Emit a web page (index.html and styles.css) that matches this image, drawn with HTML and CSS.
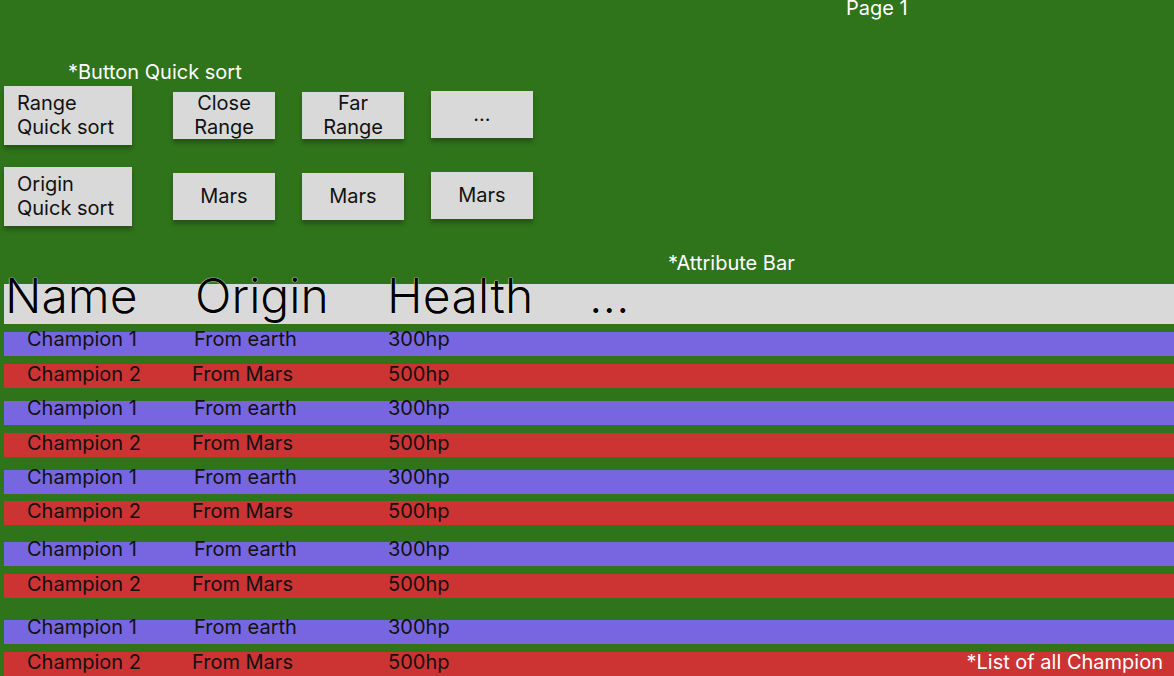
FILE: index.html
```html
<!DOCTYPE html>
<html>
<head>
<meta charset="utf-8">
<link rel="stylesheet" href="styles.css">
</head>
<body>
<div class="page">
  <div class="page-title">Page 1</div>
  <div class="note note-buttons">*Button Quick sort</div>
  <div class="sort-grid">
    <div class="btn btn-main">Range<br>Quick sort</div>
    <div class="btn">Close<br>Range</div>
    <div class="btn">Far<br>Range</div>
    <div class="btn btn-dots">...</div>
    <div class="btn btn-main">Origin<br>Quick sort</div>
    <div class="btn">Mars</div>
    <div class="btn">Mars</div>
    <div class="btn btn-dots">Mars</div>
  </div>
  <div class="note note-attr">*Attribute Bar</div>
  <div class="attr-bar">
    <span>Name</span>
    <span>Origin</span>
    <span>Health</span>
    <span>...</span>
  </div>
  <div class="list">
    <div class="pair">
      <div class="row earth"><span>Champion 1</span><span>From earth</span><span>300hp</span></div>
      <div class="row mars"><span>Champion 2</span><span>From Mars</span><span>500hp</span></div>
    </div>
    <div class="pair">
      <div class="row earth"><span>Champion 1</span><span>From earth</span><span>300hp</span></div>
      <div class="row mars"><span>Champion 2</span><span>From Mars</span><span>500hp</span></div>
    </div>
    <div class="pair tight">
      <div class="row earth"><span>Champion 1</span><span>From earth</span><span>300hp</span></div>
      <div class="row mars"><span>Champion 2</span><span>From Mars</span><span>500hp</span></div>
    </div>
    <div class="pair far">
      <div class="row earth"><span>Champion 1</span><span>From earth</span><span>300hp</span></div>
      <div class="row mars"><span>Champion 2</span><span>From Mars</span><span>500hp</span></div>
    </div>
    <div class="pair farther">
      <div class="row earth"><span>Champion 1</span><span>From earth</span><span>300hp</span></div>
      <div class="row mars"><span>Champion 2</span><span>From Mars</span><span>500hp</span><span class="list-note">*List of all Champion</span></div>
    </div>
  </div>
</div>
</body>
</html>
```
FILE: styles.css
```css
html, body {
  margin: 0;
  padding: 0;
}
body {
  background: #2f731b;
  font-family: Inter, "Noto Sans", sans-serif;
  width: 1174px;
  height: 676px;
  overflow: hidden;
}
.page {
  display: flex;
  flex-direction: column;
}
.page-title {
  color: #fff;
  font-size: 20px;
  line-height: 16px;
  height: 16px;
  padding-left: 846px;
}
.note {
  color: #fff;
  font-size: 20px;
  line-height: 20px;
  height: 20px;
}
.note-buttons {
  margin-top: 46px;
  padding-left: 68px;
}
.sort-grid {
  margin-top: 4px;
  margin-left: 4px;
  display: grid;
  grid-template-columns: 142px 102px 102px 102px;
  column-gap: 27px;
  row-gap: 22px;
  align-items: center;
  width: max-content;
}
.btn {
  background: #d9d9d9;
  box-shadow: 0 4px 4px rgba(0, 0, 0, 0.25);
  color: #111;
  font-size: 20px;
  line-height: 24px;
  height: 47px;
  padding-bottom: 2px;
  box-sizing: border-box;
  display: flex;
  flex-direction: column;
  justify-content: center;
  text-align: center;
  white-space: nowrap;
}
.btn-main {
  width: 128px;
  height: 59px;
  text-align: left;
  padding-left: 13px;
  display: block;
  padding-top: 5px;
  padding-bottom: 0;
}
.btn-dots {
  position: relative;
  top: -1px;
}
.note-attr {
  margin-top: 27px;
  padding-left: 668px;
}
.attr-bar {
  margin-top: 11px;
  margin-left: 4px;
  height: 40px;
  background: #d9d9d9;
  display: grid;
  grid-template-columns: 190px 192px 202px auto;
  padding-left: 1px;
  font-size: 48px;
  font-weight: 300;
  line-height: 24px;
  color: #000;
  text-shadow: 0 0 1px #fff, 0 0 1px #fff;
}
.attr-bar span:nth-child(3) {
  letter-spacing: 0.3px;
}
.list {
  margin-top: 8px;
  margin-left: 4px;
  display: flex;
  flex-direction: column;
  gap: 13px;
}
.pair {
  display: flex;
  flex-direction: column;
  gap: 8px;
}
.pair.tight {
  gap: 7px;
}
.pair.far {
  margin-top: 4px;
}
.pair.farther {
  margin-top: 9px;
}
.row {
  height: 24px;
  display: grid;
  grid-template-columns: 166px 194px 80px 1fr;
  padding-left: 23px;
  font-size: 20px;
  color: #111;
  white-space: nowrap;
}
.row span:nth-child(2) {
  margin-left: 1px;
}
.row.earth {
  background: #7766e0;
  line-height: 15px;
}
.row.mars {
  background: #cc3333;
  line-height: 20px;
}
.row.mars span:nth-child(2) {
  margin-left: -1px;
}
.row span:nth-child(3) {
  margin-left: 1px;
}
.list-note {
  color: #fff;
  justify-self: end;
  padding-right: 11px;
}
```
